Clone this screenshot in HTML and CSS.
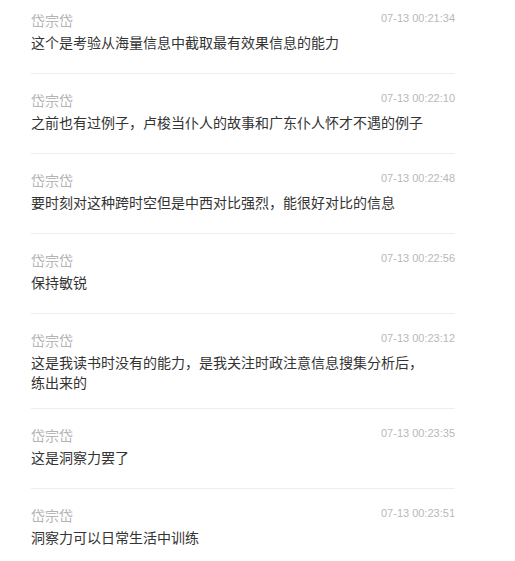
FILE: index.html
```html
<!DOCTYPE html>
<html lang="zh-CN">
<head>
  <meta charset="UTF-8" />
  <meta name="viewport" content="width=device-width, initial-scale=1.0"/>
  <title>评论</title>
  <link rel="stylesheet" href="styles.css">
</head>
<body>
  <ul class="comments">
    <li class="comment">
      <div class="meta"><span class="name">岱宗岱</span><span class="time">07-13 00:21:34</span></div>
      <div class="text">这个是考验从海量信息中截取最有效果信息的能力</div>
    </li>
    <li class="comment">
      <div class="meta"><span class="name">岱宗岱</span><span class="time">07-13 00:22:10</span></div>
      <div class="text">之前也有过例子，卢梭当仆人的故事和广东仆人怀才不遇的例子</div>
    </li>
    <li class="comment">
      <div class="meta"><span class="name">岱宗岱</span><span class="time">07-13 00:22:48</span></div>
      <div class="text">要时刻对这种跨时空但是中西对比强烈，能很好对比的信息</div>
    </li>
    <li class="comment">
      <div class="meta"><span class="name">岱宗岱</span><span class="time">07-13 00:22:56</span></div>
      <div class="text">保持敏锐</div>
    </li>
    <li class="comment">
      <div class="meta"><span class="name">岱宗岱</span><span class="time">07-13 00:23:12</span></div>
      <div class="text">这是我读书时没有的能力，是我关注时政注意信息搜集分析后，<br>练出来的</div>
    </li>
    <li class="comment">
      <div class="meta"><span class="name">岱宗岱</span><span class="time">07-13 00:23:35</span></div>
      <div class="text">这是洞察力罢了</div>
    </li>
    <li class="comment">
      <div class="meta"><span class="name">岱宗岱</span><span class="time">07-13 00:23:51</span></div>
      <div class="text">洞察力可以日常生活中训练</div>
    </li>
  </ul>
</body>
</html>
```

FILE: styles.css
```css
body {
  margin: 0;
  padding: 0;
  background-color: #fff;
  font-family: "Liberation Sans", "Noto Sans CJK SC", sans-serif;
}

.comments {
  list-style: none;
  margin: 0 0 0 31px;
  padding: 0;
  width: 424px;
}

.comment {
  padding: 16px 0 16px;
  border-bottom: 1px solid #eeeeee;
}

.comment:first-child {
  padding-top: 10px;
}

.meta {
  display: flex;
  justify-content: space-between;
  align-items: flex-start;
  height: 20px;
  line-height: 20px;
}

.name {
  font-family: "Noto Sans CJK SC", sans-serif;
  font-size: 14px;
  color: #b4b4b4;
}

.time {
  font-size: 11px;
  line-height: 16px;
  color: #b8b8b8;
}

.text {
  margin-top: 2px;
  min-height: 25px;
  font-family: "Noto Sans CJK SC", sans-serif;
  font-size: 14px;
  line-height: 20px;
  color: #333;
}
```
